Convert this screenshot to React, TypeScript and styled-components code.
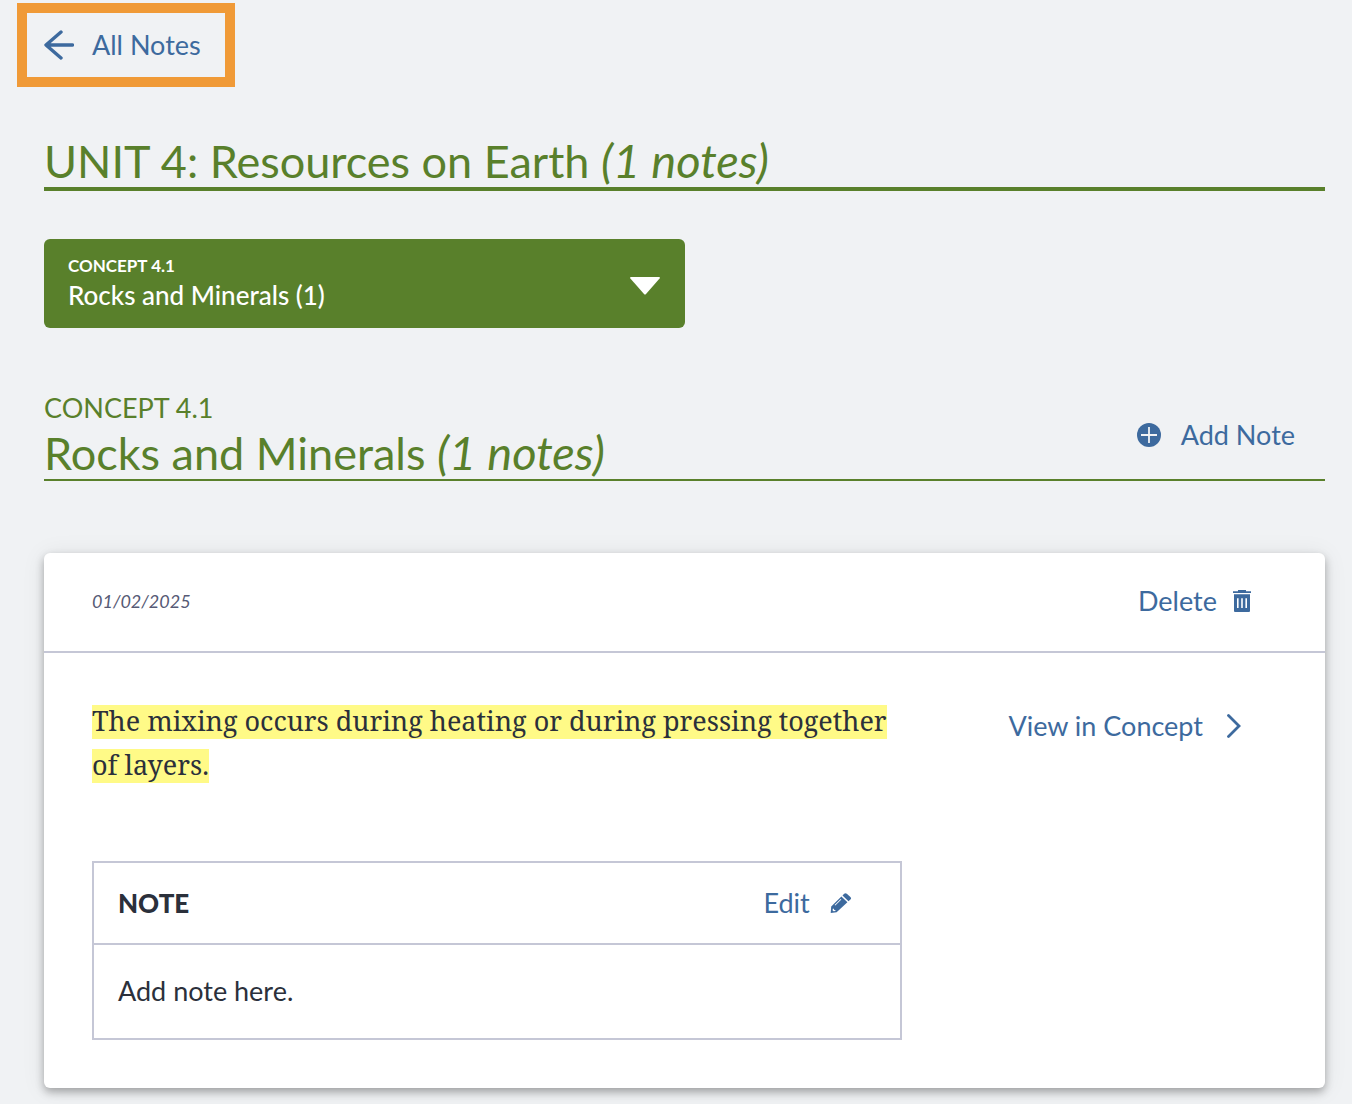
import React from "react";
import styled, { createGlobalStyle } from "styled-components";

const color = {
  page: "#f0f2f4",
  green: "#59802b",
  blue: "#3d6a9e",
  ink: "#2b303b",
  muted: "#565a75",
  line: "#c5c7d6",
  highlight: "#fffa87",
  orange: "#f09a37",
};

const GlobalStyle = createGlobalStyle`
  *, *::before, *::after { box-sizing: border-box; }
  body {
    margin: 0;
    background: ${color.page};
    color: ${color.ink};
    font-family: Lato, "Open Sans", sans-serif;
    font-size: 27px;
    line-height: 36px;
  }
  h1, h2, h3, p { margin: 0; font-weight: 400; }
`;

const Page = styled.main`
  padding: 3px 27px 16px 44px;
`;

const BackLink = styled.a`
  display: inline-flex;
  align-items: center;
  gap: 18px;
  height: 84px;
  margin-left: -27px;
  padding: 0 24px 0 16px;
  border: 10px solid ${color.orange};
  color: ${color.blue};
  text-decoration: none;
`;

const TopBar = styled.nav`
  display: flex;
  margin-bottom: 48px;
`;

const UnitTitle = styled.h1`
  border-bottom: 4px solid ${color.green};
  color: ${color.green};
  font-size: 45px;
  line-height: 52px;
`;

const NoteCount = styled.em`
  font-size: 47px;
  line-height: 48px;
`;

const ConceptPicker = styled.div`
  display: grid;
  width: 50%;
  margin: 48px 0 62px;
  border-radius: 6px;
  background: ${color.green};
  color: #fff;

  & > * { grid-area: 1 / 1; }
`;

const PickerLabel = styled.label`
  align-self: start;
  padding: 16px 24px 0;
  font-size: 17px;
  font-weight: 700;
  line-height: 22px;
  pointer-events: none;
`;

const PickerSelect = styled.select`
  appearance: none;
  width: 100%;
  height: 89px;
  padding: 34px 72px 12px 24px;
  border: 0;
  border-radius: 6px;
  background: transparent;
  color: inherit;
  font-family: inherit;
  font-size: 26px;
  font-weight: 500;
  cursor: pointer;

  option { color: ${color.ink}; }
`;

const PickerArrow = styled.svg`
  place-self: center end;
  margin: 4px 25px 0 0;
  pointer-events: none;
`;

const ConceptHeader = styled.header`
  display: flex;
  justify-content: space-between;
  align-items: center;
  border-bottom: 2px solid ${color.green};
`;

const ConceptTitle = styled.h2`
  padding-top: 1px;
  color: ${color.green};
  font-size: 45px;
  line-height: 52px;
`;

const ConceptNumber = styled.p`
  color: ${color.green};
`;

const Action = styled.button<{ $gap: number; $inset: number }>`
  display: inline-flex;
  align-items: center;
  gap: ${(p) => p.$gap}px;
  margin: 0 ${(p) => p.$inset}px 0 0;
  padding: 0;
  border: 0;
  background: none;
  color: ${color.blue};
  font: inherit;
  text-decoration: none;
  white-space: nowrap;
  cursor: pointer;
`;

const Card = styled.article`
  margin-top: 72px;
  border-radius: 6px;
  background: #fff;
  box-shadow: 0 4px 8px rgba(0, 0, 0, 0.3), 0 2px 24px rgba(0, 0, 0, 0.08);
`;

const CardHeader = styled.header`
  display: flex;
  justify-content: space-between;
  align-items: center;
  height: 100px;
  padding: 0 48px 2px;
  border-bottom: 2px solid ${color.line};
`;

const NoteDate = styled.time`
  color: ${color.muted};
  font-size: 18px;
  font-style: italic;
`;

const CardBody = styled.div`
  display: grid;
  grid-template-columns: 41fr 19fr;
  padding: 46px 48px 48px;
`;

const Excerpt = styled.p`
  margin-bottom: 74px;
  font-family: "Noto Serif", "DejaVu Serif Condensed", "DejaVu Serif", serif;
  line-height: 44px;
`;

const Highlight = styled.mark`
  background: linear-gradient(transparent 3px, ${color.highlight} 3px);
  color: inherit;
  box-decoration-break: clone;
  -webkit-box-decoration-break: clone;
`;

const ConceptLinkCell = styled.div`
  display: flex;
  justify-content: flex-end;
  align-items: flex-start;
  padding-top: 9px;
`;

const NoteBox = styled.section`
  border: 2px solid ${color.line};
`;

const NoteBoxHeader = styled.header`
  display: flex;
  justify-content: space-between;
  align-items: center;
  height: 82px;
  padding: 0 24px;
  border-bottom: 2px solid ${color.line};
`;

const NoteBoxTitle = styled.h3`
  font-size: 26px;
  font-weight: 900;
`;

const NoteText = styled.p`
  padding: 28px 24px 29px;
`;

const ArrowLeftIcon = () => (
  <svg width="31" height="30" viewBox="0 0 31 30" fill="none" stroke="currentColor" strokeWidth="3.4" strokeLinecap="round" strokeLinejoin="round" aria-hidden="true">
    <path d="M18 2 3 15l15 13M3.5 15h26" />
  </svg>
);

const PlusCircleIcon = () => (
  <svg width="24" height="24" viewBox="0 0 24 24" aria-hidden="true">
    <circle cx="12" cy="12" r="12" fill="currentColor" />
    <path d="M12 4v16M4 12h16" stroke={color.page} strokeWidth="1.8" />
  </svg>
);

const TrashIcon = () => (
  <svg width="18" height="22" viewBox="0 0 18 22" aria-hidden="true">
    <path fill="currentColor" d="M5 0h8v1.3h5V3H0V1.3h5z" />
    <path fill="currentColor" fillRule="evenodd" d="M1 4.3h16V21a1 1 0 0 1-1 1H2a1 1 0 0 1-1-1zM4 8.3v9.8h1.6V8.3zm4.2 0v9.8h1.6V8.3zm4.2 0v9.8H14V8.3z" />
  </svg>
);

const ChevronRightIcon = () => (
  <svg width="14" height="24" viewBox="0 0 14 24" fill="none" stroke="currentColor" strokeWidth="2.8" strokeLinecap="round" strokeLinejoin="miter" aria-hidden="true">
    <path d="M1.5 1.5 12 12 1.5 22.5" />
  </svg>
);

const PencilIcon = () => (
  <svg width="22" height="20" viewBox="0 0 22 20" aria-hidden="true">
    <path fill="currentColor" d="M14.2.7a2 2 0 0 1 2.6 0l3.6 3.4a1.7 1.7 0 0 1 0 2.5l-1.9 1.7-6-5.8z" />
    <path fill="currentColor" fillRule="evenodd" d="M11.4 3.6l6 5.7L6.6 19.2.7 20l.5-6.5zM2.8 15.8l-.2 1.6 1 .9 1.9-.3-.2-.9-1.1-.2-.2-1.1zM10.7 6 4.6 11.9l.7.6 6.1-5.9z" />
  </svg>
);

export default function App() {
  return (
    <>
      <GlobalStyle />
      <Page>
        <TopBar>
          <BackLink href="#all-notes">
            <ArrowLeftIcon />
            All Notes
          </BackLink>
        </TopBar>

        <UnitTitle>
          UNIT 4: Resources on Earth <NoteCount>(1 notes)</NoteCount>
        </UnitTitle>

        <ConceptPicker>
          <PickerSelect id="concept" defaultValue="4.1">
            <option value="4.1">Rocks and Minerals (1)</option>
          </PickerSelect>
          <PickerLabel htmlFor="concept">CONCEPT 4.1</PickerLabel>
          <PickerArrow width="30" height="18" viewBox="0 0 30 18" aria-hidden="true">
            <path fill="currentColor" d="M1 0h28q1.5.4.6 1.5L16 17q-1 1-2 0L.4 1.5Q-.5.4 1 0z" />
          </PickerArrow>
        </ConceptPicker>

        <ConceptHeader>
          <div>
            <ConceptNumber>CONCEPT 4.1</ConceptNumber>
            <ConceptTitle>
              Rocks and Minerals <NoteCount>(1 notes)</NoteCount>
            </ConceptTitle>
          </div>
          <Action type="button" $gap={20} $inset={30}>
            <PlusCircleIcon />
            Add Note
          </Action>
        </ConceptHeader>

        <Card>
          <CardHeader>
            <NoteDate dateTime="2025-01-02">01/02/2025</NoteDate>
            <Action type="button" $gap={16} $inset={26}>
              Delete
              <TrashIcon />
            </Action>
          </CardHeader>
          <CardBody>
            <div>
              <Excerpt>
                <Highlight>
                  The mixing occurs during heating or during pressing together of layers.
                </Highlight>
              </Excerpt>
              <NoteBox>
                <NoteBoxHeader>
                  <NoteBoxTitle>NOTE</NoteBoxTitle>
                  <Action type="button" $gap={20} $inset={24}>
                    Edit
                    <PencilIcon />
                  </Action>
                </NoteBoxHeader>
                <NoteText>Add note here.</NoteText>
              </NoteBox>
            </div>
            <ConceptLinkCell>
              <Action as="a" href="#concept-4-1" $gap={24} $inset={36}>
                View in Concept
                <ChevronRightIcon />
              </Action>
            </ConceptLinkCell>
          </CardBody>
        </Card>
      </Page>
    </>
  );
}
